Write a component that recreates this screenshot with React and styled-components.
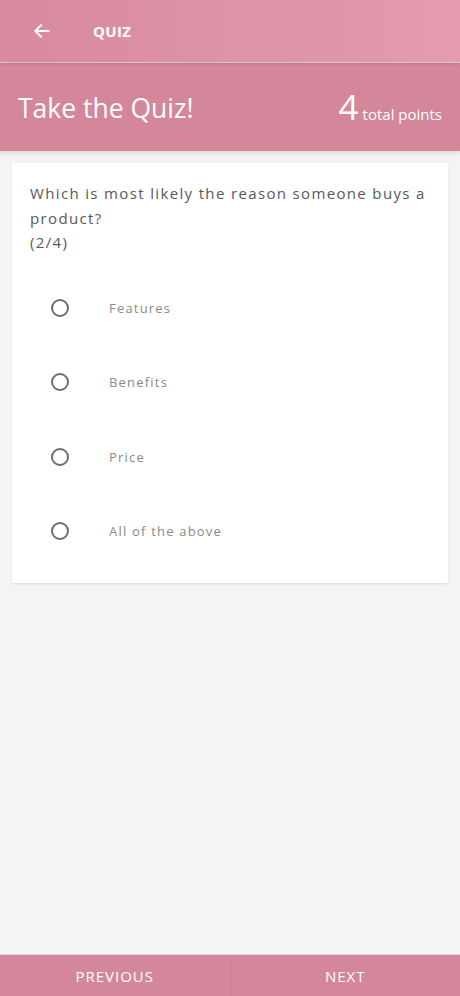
import React, { useState } from 'react'
import styled, { createGlobalStyle } from 'styled-components'

const GlobalStyle = createGlobalStyle`
    html, body {
        margin: 0;
        padding: 0;
        background: #f4f4f4;
        font-family: 'Open Sans', 'Noto Sans', sans-serif;
    }
`

const options = ['Features', 'Benefits', 'Price', 'All of the above']

export default function App() {
    const [selected, setSelected] = useState(null)

    return (
        <Screen>
            <GlobalStyle />
            <Toolbar>
                <BackButton aria-label="back">
                    <svg width="20" height="20" viewBox="0 0 24 24">
                        <path
                            d="M20 12H4M11 5l-7 7 7 7"
                            fill="none"
                            stroke="#fff"
                            strokeWidth="2.4"
                            strokeLinecap="round"
                            strokeLinejoin="round"
                        />
                    </svg>
                </BackButton>
                <ToolbarTitle>QUIZ</ToolbarTitle>
            </Toolbar>
            <Header>
                <Title>Take the Quiz!</Title>
                <Points>
                    <PointsValue>4</PointsValue>
                    <PointsLabel>total points</PointsLabel>
                </Points>
            </Header>
            <Content>
                <Card>
                    <Question>
                        Which is most likely the reason someone buys a product?
                        <br />
                        (2/4)
                    </Question>
                    <OptionList>
                        {options.map((opt, i) => (
                            <Option key={opt} onClick={() => setSelected(i)}>
                                <Radio checked={selected === i} />
                                <OptionLabel>{opt}</OptionLabel>
                            </Option>
                        ))}
                    </OptionList>
                </Card>
            </Content>
            <BottomBar>
                <NavButton>PREVIOUS</NavButton>
                <Divider />
                <NavButton>NEXT</NavButton>
            </BottomBar>
        </Screen>
    )
}

const Screen = styled.div`
    width: 460px;
    height: 996px;
    display: flex;
    flex-direction: column;
    background: #f4f4f4;
    overflow: hidden;
`

const Toolbar = styled.div`
    height: 62px;
    flex-shrink: 0;
    display: flex;
    align-items: center;
    background: linear-gradient(90deg, #d88a9f 0%, #e096aa 70%, #e59cb0 100%);
    box-shadow: 0 1px 3px rgba(120, 40, 60, 0.35);
    position: relative;
    z-index: 2;
`

const BackButton = styled.div`
    width: 20px;
    height: 20px;
    margin-left: 32px;
    display: flex;
    align-items: center;
    justify-content: center;
`

const ToolbarTitle = styled.div`
    margin-left: 41px;
    color: #fff;
    font-weight: 700;
    font-size: 15px;
    letter-spacing: 0.3px;
`

const Header = styled.div`
    height: 88px;
    flex-shrink: 0;
    margin-top: 1px;
    display: flex;
    align-items: center;
    justify-content: space-between;
    padding: 0 18px 0 18px;
    background: #d4869a;
    color: #fff;
    box-shadow: 0 2px 4px rgba(0, 0, 0, 0.12);
    position: relative;
    z-index: 1;
`

const Title = styled.div`
    font-size: 26.5px;
    font-weight: 400;
    margin-top: 1px;
`

const Points = styled.div`
    display: flex;
    align-items: baseline;
    margin-top: -2px;
`

const PointsValue = styled.span`
    font-size: 35px;
    font-weight: 400;
    margin-right: 4px;
`

const PointsLabel = styled.span`
    font-size: 15px;
`

const Content = styled.div`
    flex: 1;
    padding: 12px 12px 0 12px;
`

const Card = styled.div`
    background: #fff;
    padding: 18px 18px 14px 18px;
    box-shadow: 0 1px 2px rgba(0, 0, 0, 0.1);
`

const Question = styled.div`
    font-size: 15px;
    line-height: 24.5px;
    letter-spacing: 1.35px;
    color: #555a5e;
`

const OptionList = styled.div`
    display: flex;
    flex-direction: column;
    margin-top: 16px;
`

const Option = styled.div`
    height: 74.5px;
    display: flex;
    align-items: center;
    cursor: pointer;
`

const Radio = styled.span`
    width: 14px;
    height: 14px;
    border-radius: 50%;
    border: 2px solid ${({ checked }) => (checked ? '#d4869a' : '#6d6d6d')};
    margin-left: 21px;
    flex-shrink: 0;
    box-sizing: content-box;
`

const OptionLabel = styled.span`
    margin-left: 40px;
    font-size: 13px;
    letter-spacing: 1.2px;
    color: #8a8a8a;
`

const BottomBar = styled.div`
    height: 41px;
    flex-shrink: 0;
    display: flex;
    align-items: stretch;
    background: #d4879a;
    border-top: 1px solid #e8d3d8;
`

const NavButton = styled.div`
    flex: 1;
    display: flex;
    align-items: center;
    justify-content: center;
    color: #fff;
    font-size: 15px;
    letter-spacing: 1px;
`

const Divider = styled.div`
    width: 1px;
    margin-top: 5px;
    background: #c67a8d;
`
